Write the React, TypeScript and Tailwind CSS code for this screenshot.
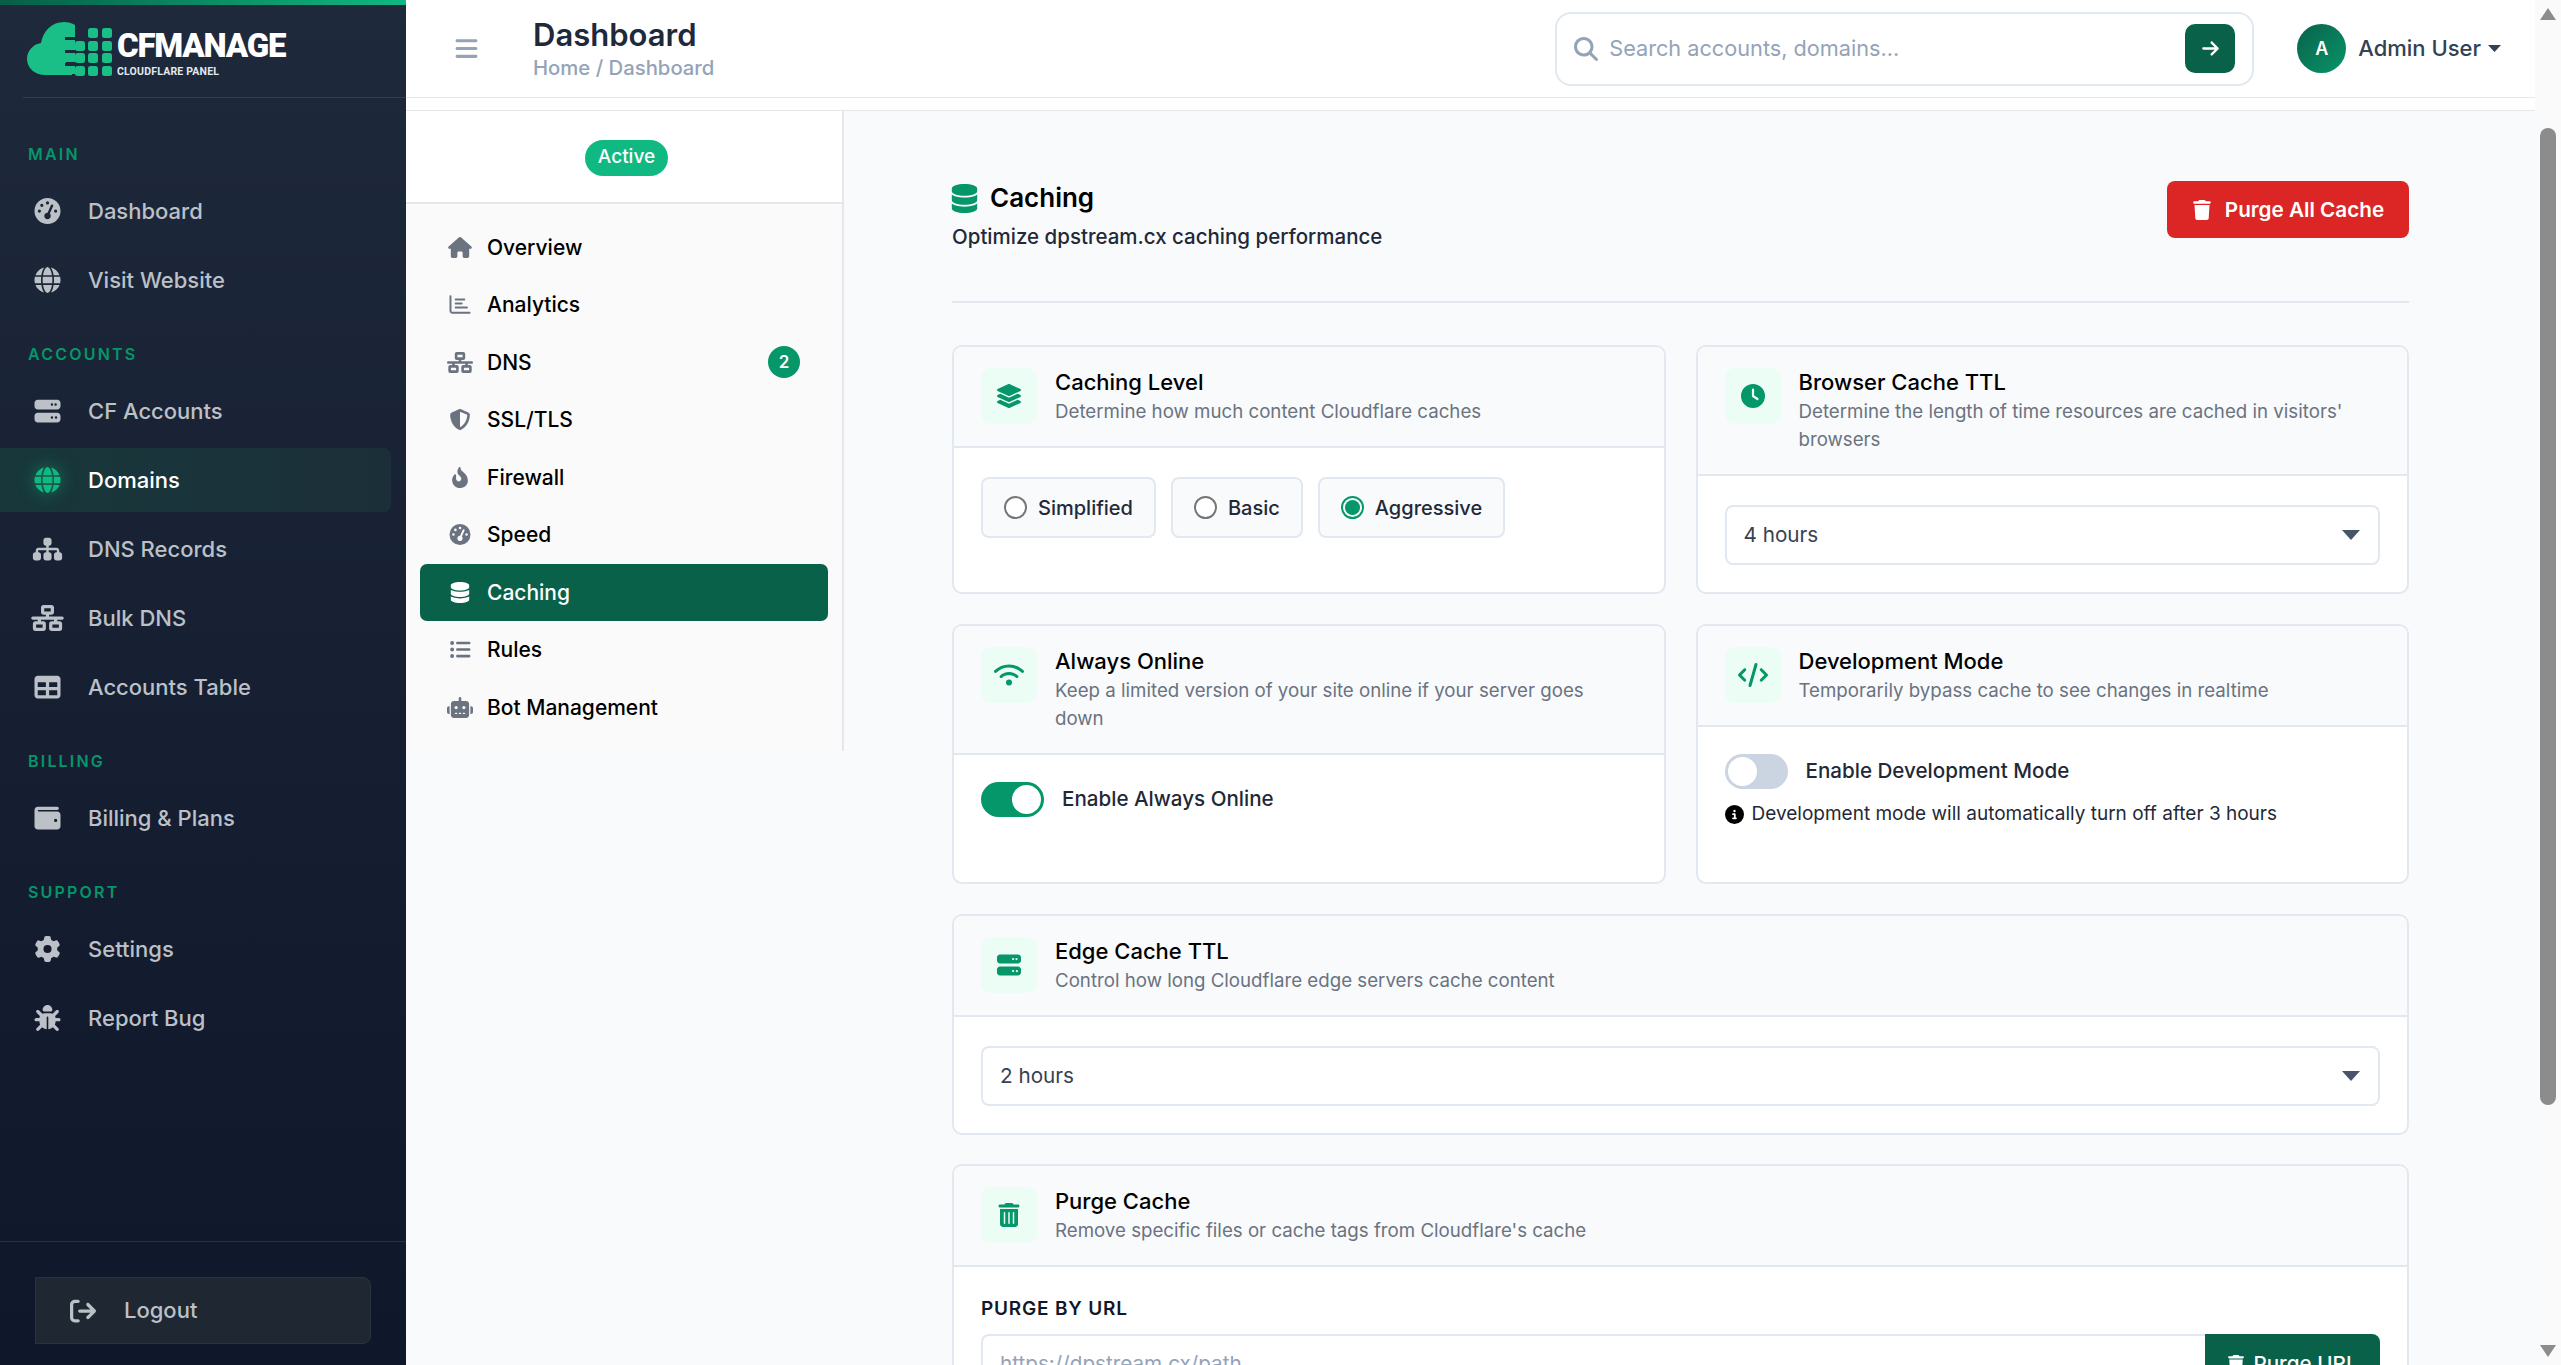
import type { ReactNode } from "react";
import { FaLayerGroup } from "react-icons/fa";
import {
  FaArrowRight,
  FaArrowRightFromBracket,
  FaBars,
  FaBug,
  FaCircleInfo,
  FaClock,
  FaCode,
  FaDatabase,
  FaFireFlameCurved,
  FaGaugeHigh,
  FaGear,
  FaGlobe,
  FaHouse,
  FaListUl,
  FaMagnifyingGlass,
  FaNetworkWired,
  FaRegChartBar,
  FaRobot,
  FaServer,
  FaShieldHalved,
  FaSitemap,
  FaTable,
  FaTrash,
  FaTrashCan,
  FaWallet,
  FaWifi,
} from "react-icons/fa6";

function Logo() {
  const cells = [
    [88, 28], [102, 28],
    [75, 41], [88, 41], [102, 41],
    [75, 53], [88, 53], [102, 53],
    [75, 66], [88, 66], [102, 66],
  ];
  return (
    <div className="flex items-start">
      <svg width="86" height="54" viewBox="27 22 86 54" className="shrink-0">
        <path
          fill="#19bf87"
          d="M72 75H45c-10 0-18-7-18-16 0-8 6-15 14-16 2-12 11-21 23-21 4 0 8 1 11 3v14H66v1h9v10H66v2h9v10H66v2h9v10h-3z"
        />
        <rect x="65" y="37" width="10" height="3" fill="#1e293b" />
        <rect x="65" y="50" width="10" height="3" fill="#1e293b" />
        <rect x="65" y="63" width="10" height="3" fill="#1e293b" />
        {cells.map(([x, y]) => (
          <rect key={`${x}-${y}`} x={x} y={y} width="10" height="10" rx="2.5" fill="#19bf87" />
        ))}
      </svg>
      <div className="ml-[4px] font-['Roboto',sans-serif] text-white">
        <div className="mt-[9px] text-[33px] leading-[30px] font-black tracking-[-1.2px]">CFMANAGE</div>
        <div className="mt-[5px] text-[10.5px] leading-[12px] font-bold tracking-[0.2px] text-[#e2e8f0]">CLOUDFLARE PANEL</div>
      </div>
    </div>
  );
}

function SideLabel({ children }: { children: ReactNode }) {
  return (
    <div className="h-[62px] pl-[28px] pt-[27px] text-[16px] leading-[20px] font-semibold tracking-[2.2px] text-[#059669]">
      {children}
    </div>
  );
}

function SideItem({ icon, label, active }: { icon: ReactNode; label: string; active?: boolean }) {
  return (
    <div
      className={
        active
          ? "mb-[5px] flex h-[64px] w-[391px] items-center gap-[24px] rounded-r-[8px] bg-gradient-to-r from-[#17383b] to-[#1c2f39] pl-[31px] text-white"
          : "mb-[5px] flex h-[64px] w-[391px] items-center gap-[24px] pl-[31px] text-[#bcc0c7]"
      }
    >
      <span
        className={
          active
            ? "flex w-[33px] justify-center text-[#10b981] drop-shadow-[0_0_8px_rgba(16,185,129,0.6)] [&>svg]:h-[26px] [&>svg]:w-[33px]"
            : "flex w-[33px] justify-center [&>svg]:h-[26px] [&>svg]:w-[33px]"
        }
      >
        {icon}
      </span>
      <span className="text-[22px] font-medium">{label}</span>
    </div>
  );
}

function Sidebar() {
  return (
    <aside className="flex h-screen w-[406px] shrink-0 flex-col bg-gradient-to-b from-[#1e293b] to-[#0f172a]">
      <div className="h-[5px] bg-gradient-to-r from-[#065f46] to-[#10b981]" />
      <div className="ml-[23px] h-[93px] border-b border-white/10 pl-[4px] pt-[17px]">
        <Logo />
      </div>
      <nav className="mt-[19px]">
        <SideLabel>MAIN</SideLabel>
        <SideItem icon={<FaGaugeHigh />} label="Dashboard" />
        <SideItem icon={<FaGlobe />} label="Visit Website" />
        <SideLabel>ACCOUNTS</SideLabel>
        <SideItem icon={<FaServer />} label="CF Accounts" />
        <SideItem icon={<FaGlobe />} label="Domains" active />
        <SideItem icon={<FaSitemap />} label="DNS Records" />
        <SideItem icon={<FaNetworkWired />} label="Bulk DNS" />
        <SideItem icon={<FaTable />} label="Accounts Table" />
        <SideLabel>BILLING</SideLabel>
        <SideItem icon={<FaWallet />} label="Billing & Plans" />
        <SideLabel>SUPPORT</SideLabel>
        <SideItem icon={<FaGear />} label="Settings" />
        <SideItem icon={<FaBug />} label="Report Bug" />
      </nav>
      <div className="mt-auto h-[124px] border-t border-white/10 px-[35px] pt-[35px]">
        <div className="flex h-[67px] items-center gap-[28px] rounded-r-[8px] border border-[#23363c] bg-[#1f2733] pl-[34px] text-[22px] font-medium text-[#bcc0c7]">
          <FaArrowRightFromBracket className="text-[26px]" />
          Logout
        </div>
      </div>
    </aside>
  );
}

function Header() {
  return (
    <header className="flex h-[98px] shrink-0 items-center border-b border-[#e5e7eb] bg-white pl-[48px] pr-[34px]">
      <FaBars className="text-[25px] text-[#94a3b8]" />
      <div className="ml-[54px]">
        <div className="font-['Inter',sans-serif] text-[31px] leading-[36px] font-semibold text-[#1e293b]">Dashboard</div>
        <div className="mt-[3px] text-[20.3px] leading-[24px] font-medium text-[#94a3b8]">Home / Dashboard</div>
      </div>
      <div className="ml-auto flex h-[74px] w-[699px] items-center rounded-[16px] border-2 border-[#e2e8f0] pl-[17px] pr-[17px]">
        <FaMagnifyingGlass className="shrink-0 text-[24px] text-[#94a3b8]" />
        <input
          readOnly
          placeholder="Search accounts, domains..."
          className="ml-[11px] min-w-0 flex-1 bg-transparent text-[21.7px] outline-none placeholder:text-[#94a3b8]"
        />
        <button className="flex h-[49px] w-[50px] shrink-0 items-center justify-center rounded-[10px] bg-[#0a614a] text-[19px] text-white">
          <FaArrowRight />
        </button>
      </div>
      <div className="ml-[43px] flex h-[49px] w-[49px] items-center justify-center rounded-full bg-gradient-to-br from-[#0a614a] to-[#059669] text-[18px] font-semibold text-white">
        A
      </div>
      <span className="ml-[12px] text-[22px] font-medium text-[#334155]">Admin User</span>
      <svg width="13" height="7" viewBox="0 0 13 7" className="ml-[7px]">
        <polygon points="0,0 13,0 6.5,7" fill="#334155" />
      </svg>
    </header>
  );
}

const subItems = [
  { icon: <FaHouse />, label: "Overview" },
  { icon: <FaRegChartBar />, label: "Analytics" },
  { icon: <FaNetworkWired />, label: "DNS", badge: "2" },
  { icon: <FaShieldHalved />, label: "SSL/TLS" },
  { icon: <FaFireFlameCurved />, label: "Firewall" },
  { icon: <FaGaugeHigh />, label: "Speed" },
  { icon: <FaDatabase />, label: "Caching", active: true },
  { icon: <FaListUl />, label: "Rules" },
  { icon: <FaRobot />, label: "Bot Management" },
];

function SubNav() {
  return (
    <div className="h-[640px] w-[438px] shrink-0 border-r-2 border-[#e5e7eb] bg-[#fafafa]">
      <div className="flex h-[93px] items-center justify-center border-b-2 border-[#e5e7eb] bg-white pl-[5px] pt-[2px]">
        <span className="flex h-[36px] w-[83px] items-center justify-center rounded-full bg-[#10b981] text-[19px] font-medium text-white">
          Active
        </span>
      </div>
      <div className="flex flex-col gap-[1px] pl-[14px] pr-[14px] pt-[15px]">
        {subItems.map((item) => (
          <div
            key={item.label}
            className={
              item.active
                ? "flex h-[56.5px] items-center rounded-[7px] bg-[#0a614a] pl-[27px] pr-[28px] text-white"
                : "flex h-[56.5px] items-center pl-[27px] pr-[28px] text-black"
            }
          >
            <span className={item.active ? "flex w-[26px] justify-center text-white [&>svg]:h-[21px] [&>svg]:w-[26px]" : "flex w-[26px] justify-center text-[#6b7280] [&>svg]:h-[21px] [&>svg]:w-[26px]"}>
              {item.icon}
            </span>
            <span className="ml-[14px] text-[21px] font-medium">{item.label}</span>
            {item.badge && (
              <span className="ml-auto flex h-[32px] w-[32px] items-center justify-center rounded-full bg-[#059669] font-['Inter',sans-serif] text-[17px] font-semibold text-white">
                {item.badge}
              </span>
            )}
          </div>
        ))}
      </div>
    </div>
  );
}

function Card({ icon, title, desc, children, bodyClass }: { icon: ReactNode; title: string; desc: string; children: ReactNode; bodyClass?: string }) {
  return (
    <div className="overflow-hidden rounded-[10px] border-2 border-[#e2e8f0] bg-white">
      <div className="flex gap-[18px] border-b-2 border-[#e2e8f0] bg-[#f8fafc] px-[27px] pb-[20px] pt-[21px]">
        <div className="flex h-[56px] w-[56px] shrink-0 items-center justify-center rounded-[10px] bg-[#ecfdf5] text-[#059669] [&>svg]:h-[24px] [&>svg]:w-[30px]">
          {icon}
        </div>
        <div className="min-w-0">
          <div className="text-[22px] leading-[28px] font-medium text-black">{title}</div>
          <div className="mt-[2px] text-[18.7px] leading-[28px] text-[#6b7280]">{desc}</div>
        </div>
      </div>
      <div className={bodyClass ?? "px-[27px] pb-[27px] pt-[29px]"}>{children}</div>
    </div>
  );
}

function RadioPill({ label, checked }: { label: string; checked?: boolean }) {
  return (
    <div className="flex h-[61px] items-center gap-[11px] rounded-[8px] border-2 border-[#e2e8f0] bg-[#f8fafc] px-[21px] text-[20px] font-medium text-[#1f2937]">
      {checked ? (
        <span className="flex h-[23px] w-[23px] items-center justify-center rounded-full border-2 border-[#059669]">
          <span className="h-[15px] w-[15px] rounded-full bg-[#059669]" />
        </span>
      ) : (
        <span className="h-[23px] w-[23px] rounded-full border-2 border-[#767676] bg-white" />
      )}
      {label}
    </div>
  );
}

function Toggle({ on }: { on?: boolean }) {
  return (
    <span className={on ? "flex h-[35px] w-[63px] items-center justify-end rounded-full bg-[#059669] pr-[3px]" : "flex h-[35px] w-[63px] items-center rounded-full bg-[#cbd5e1] pl-[3px]"}>
      <span className="h-[29px] w-[29px] rounded-full bg-white" />
    </span>
  );
}

function SelectBox({ value }: { value: string }) {
  return (
    <div className="flex h-[60px] items-center justify-between rounded-[8px] border-2 border-[#e2e8f0] bg-white pl-[17px] pr-[18px] text-[20.7px] text-[#374151]">
      {value}
      <svg width="18" height="10" viewBox="0 0 18 10">
        <polygon points="0,0 18,0 9,10" fill="#475569" />
      </svg>
    </div>
  );
}

function Content() {
  return (
    <div className="min-w-0 flex-1 pl-[108px] pr-[126px] pt-[70px]">
      <div className="flex items-start justify-between border-b-2 border-[#e2e8f0] pb-[50px]">
        <div className="pt-[2px]">
          <div className="flex items-center gap-[11px] text-[26px] leading-[30px] font-semibold text-black">
            <FaDatabase className="-ml-[2px] text-[29px] text-[#059669]" />
            Caching
          </div>
          <div className="mt-[10px] text-[20.5px] leading-[28px] font-medium text-[#1f2937]">Optimize dpstream.cx caching performance</div>
        </div>
        <button className="flex h-[57px] w-[242px] items-center justify-center gap-[13px] rounded-[8px] bg-[#dc2626] text-[20.7px] font-semibold text-white">
          <FaTrash className="text-[20px]" />
          Purge All Cache
        </button>
      </div>

      <div className="mt-[42px] grid grid-cols-2 gap-[30px]">
        <Card icon={<FaLayerGroup />} title="Caching Level" desc="Determine how much content Cloudflare caches">
          <div className="flex gap-[15px]">
            <RadioPill label="Simplified" />
            <RadioPill label="Basic" />
            <RadioPill label="Aggressive" checked />
          </div>
        </Card>
        <Card icon={<FaClock />} title="Browser Cache TTL" desc="Determine the length of time resources are cached in visitors' browsers">
          <SelectBox value="4 hours" />
        </Card>
        <Card icon={<FaWifi />} title="Always Online" desc="Keep a limited version of your site online if your server goes down" bodyClass="px-[27px] pt-[27px] pb-[65px]">
          <div className="flex items-center gap-[18px] text-[20.6px] font-medium text-[#1f2937]">
            <Toggle on />
            Enable Always Online
          </div>
        </Card>
        <Card icon={<FaCode />} title="Development Mode" desc="Temporarily bypass cache to see changes in realtime" bodyClass="px-[27px] pt-[27px] pb-[27px]">
          <div className="flex items-center gap-[18px] text-[20.6px] font-medium text-[#1f2937]">
            <Toggle />
            Enable Development Mode
          </div>
          <div className="mt-[12px] flex items-center gap-[8px] text-[19px] leading-[26px] text-[#1f2937]">
            <FaCircleInfo className="text-[19px] text-black" />
            Development mode will automatically turn off after 3 hours
          </div>
        </Card>
        <div className="col-span-2">
          <Card icon={<FaServer />} title="Edge Cache TTL" desc="Control how long Cloudflare edge servers cache content">
            <SelectBox value="2 hours" />
          </Card>
        </div>
        <div className="col-span-2 -mt-[1px]">
          <Card icon={<FaTrashCan />} title="Purge Cache" desc="Remove specific files or cache tags from Cloudflare's cache">
            <div className="text-[19px] leading-[26px] font-semibold tracking-[0.8px] text-[#111827]">PURGE BY URL</div>
            <div className="mt-[12px] flex h-[60px]">
              <input
                readOnly
                placeholder="https://dpstream.cx/path"
                className="min-w-0 flex-1 rounded-l-[8px] border-2 border-r-0 border-[#e2e8f0] bg-white pl-[17px] text-[20.7px] outline-none placeholder:text-[#94a3b8]"
              />
              <button className="flex w-[175px] items-center justify-center gap-[8px] rounded-r-[8px] bg-[#0a614a] text-[20.7px] font-medium text-white">
                <FaTrash className="text-[18px]" />
                Purge URL
              </button>
            </div>
          </Card>
        </div>
      </div>
    </div>
  );
}

function Scrollbar() {
  return (
    <div className="relative h-screen w-[26px] shrink-0 bg-[#fafafa]">
      <svg width="16" height="12" viewBox="0 0 16 12" className="absolute left-[5px] top-[8px]">
        <polygon points="8,0 16,12 0,12" fill="#8c8c8c" />
      </svg>
      <div className="absolute left-[5px] top-[128px] h-[977px] w-[16px] rounded-full bg-[#8c8c8c]" />
      <svg width="16" height="12" viewBox="0 0 16 12" className="absolute left-[5px] top-[1345px]">
        <polygon points="0,0 16,0 8,12" fill="#8c8c8c" />
      </svg>
    </div>
  );
}

export default function App() {
  return (
    <div className="flex h-screen w-full overflow-hidden bg-[#f8fafc] font-['Inter',sans-serif]">
      <Sidebar />
      <div className="flex h-screen min-w-0 flex-1 flex-col overflow-hidden">
        <Header />
        <div className="h-[13px] shrink-0 border-b border-[#e5e7eb] bg-white" />
        <div className="flex min-h-0 flex-1 items-start overflow-hidden">
          <SubNav />
          <Content />
        </div>
      </div>
      <Scrollbar />
    </div>
  );
}
